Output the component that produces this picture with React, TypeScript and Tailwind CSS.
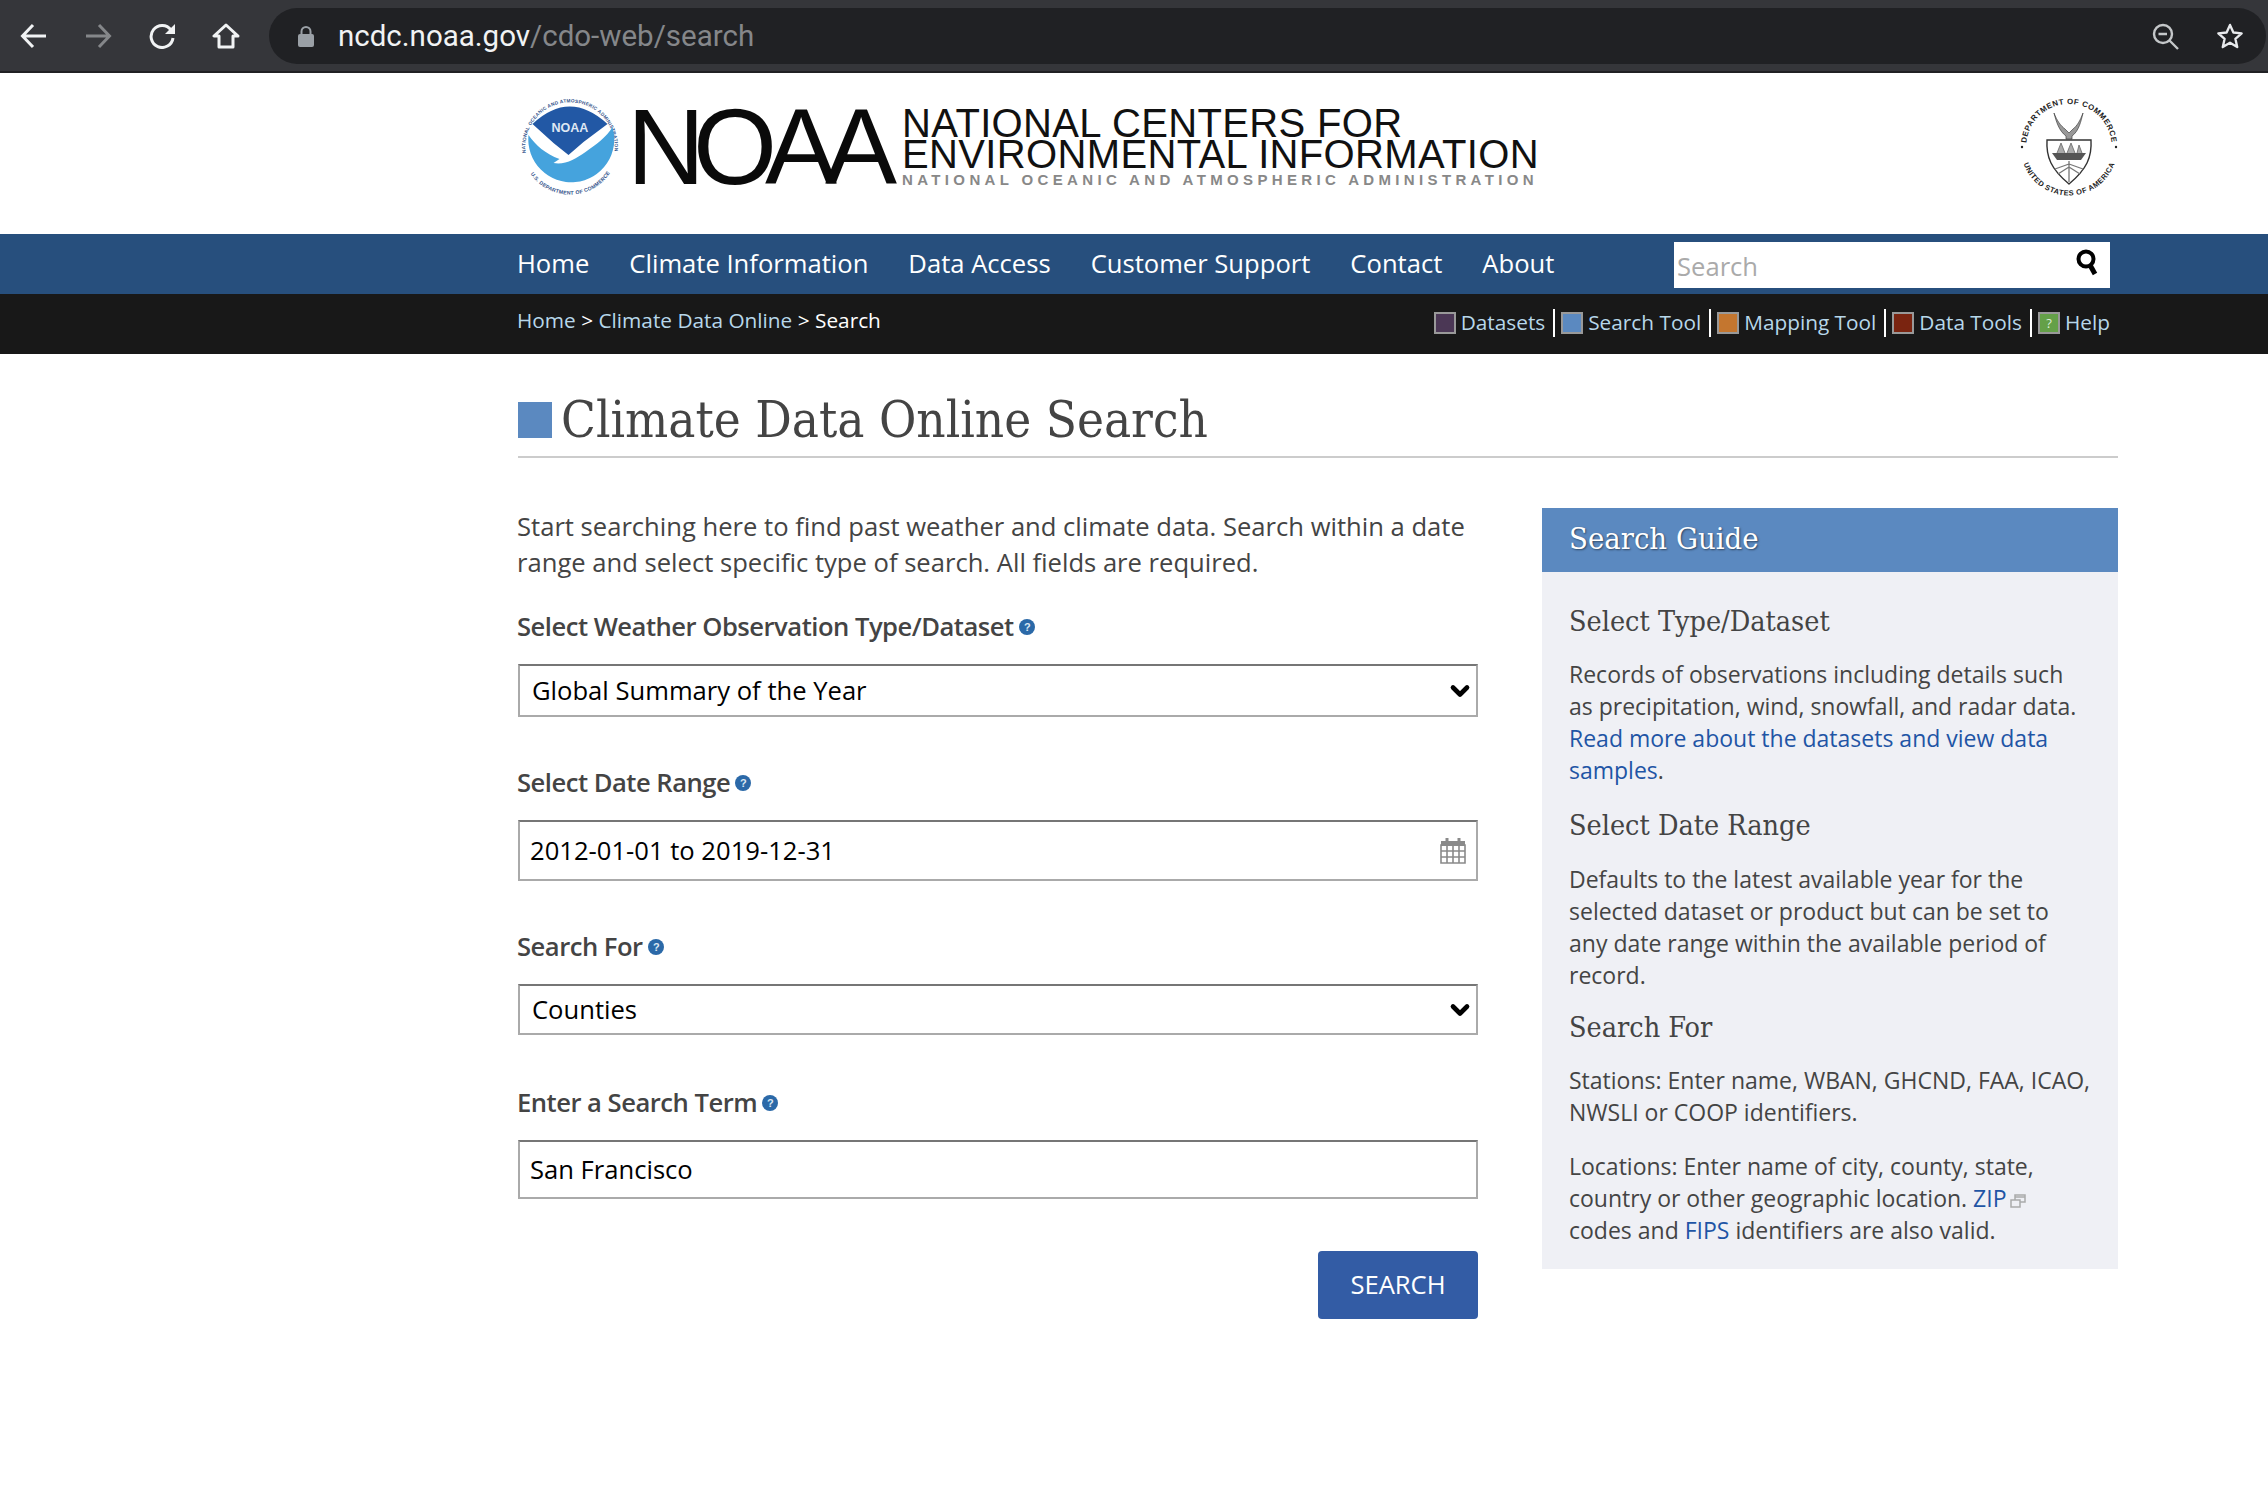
import { ChevronDown } from "lucide-react";
import type { ReactNode } from "react";

function NoaaSeal() {
  return (
    <svg width="98" height="100" viewBox="0 0 98 100" className="shrink-0">
      <defs>
        <path id="noaa-top" d="M5 58 A44.7 44.7 0 1 1 93 58" />
        <path id="noaa-bottom" d="M4 66 A47.8 47.8 0 0 0 94 66" />
      </defs>
      <text fontSize="4.8" fontWeight="700" fill="#35558c" fontFamily="Liberation Sans, sans-serif">
        <textPath href="#noaa-top" startOffset="2" textLength="150">NATIONAL OCEANIC AND ATMOSPHERIC ADMINISTRATION</textPath>
      </text>
      <text fontSize="5.2" fontWeight="700" fill="#35558c" fontFamily="Liberation Sans, sans-serif">
        <textPath href="#noaa-bottom" startOffset="12" textLength="94">U.S. DEPARTMENT OF COMMERCE</textPath>
      </text>
      <g transform="translate(2.5 0)">
        <path d="M5 38 C12 48 22 57 36 62 L30 66 C42 68 52 62 62 55 C72 48 83 40 89 30 A43 43 0 1 1 5 38 Z" fill="#45a3dd" />
        <path d="M9 27 Q46 -8 84 27 L60 45 L45 58 L30 46 Z" fill="#2258a5" />
        <text x="46.5" y="35" textAnchor="middle" fontSize="12.5" fontWeight="700" fill="#dfe8f3" fontFamily="Liberation Sans, sans-serif">NOAA</text>
      </g>
    </svg>
  );
}

function CommerceSeal() {
  return (
    <svg width="100" height="100" viewBox="0 0 100 100" className="shrink-0">
      <defs>
        <path id="doc-top" d="M8 58 A42.8 42.8 0 1 1 92 58" />
        <path id="doc-bottom" d="M3 62 A48.5 48.5 0 0 0 97 62" />
      </defs>
      <text fontSize="7.8" fontWeight="700" fill="#222" fontFamily="Liberation Sans, sans-serif">
        <textPath href="#doc-top" startOffset="12" textLength="126">DEPARTMENT OF COMMERCE</textPath>
      </text>
      <text fontSize="7.4" fontWeight="700" fill="#222" fontFamily="Liberation Sans, sans-serif">
        <textPath href="#doc-bottom" startOffset="5" textLength="118">UNITED STATES OF AMERICA</textPath>
      </text>
      <circle cx="3" cy="50" r="1.2" fill="#222" />
      <circle cx="97" cy="50" r="1.2" fill="#222" />
      <path d="M35 16 C38 24 42 29 46 32 L50 36 L54 32 C58 29 61 24 64 16 C62 24 60 34 53 39 L53 42 L47 42 L47 39 C40 34 37 24 35 16 Z" fill="#999" stroke="#444" strokeWidth="0.7" />
      <path d="M28 43 L72 43 C73 60 68 72 50 87 C32 72 27 60 28 43 Z" fill="#fff" stroke="#333" strokeWidth="1.4" />
      <path d="M33 56 L67 56 L62 63 L38 63 Z" fill="#555" />
      <path d="M38 56 L42 46 L46 56 M48 56 L52 46 L56 56 M58 56 L60 48 L63 56" fill="#aaa" stroke="#666" strokeWidth="0.8" />
      <path d="M50 64 L50 85 M50 67 L36 72 M50 67 L64 72 M50 70 L39 77 M50 70 L61 77" stroke="#777" strokeWidth="1.3" fill="none" />
    </svg>
  );
}

function HelpDot() {
  return (
    <svg width="16" height="16" viewBox="0 0 16 16" className="ml-[5px] inline-block shrink-0">
      <circle cx="8" cy="8" r="8" fill="#2b69a8" />
      <text x="8" y="12" textAnchor="middle" fontSize="11" fontWeight="700" fill="#dbe7f3" fontFamily="Liberation Sans, sans-serif">?</text>
    </svg>
  );
}

function FieldLabel({ children, className }: { children: ReactNode; className: string }) {
  return (
    <div className={`flex h-9 items-center text-[25.6px] font-semibold tracking-[-0.5px] text-[#444] ${className}`}>
      {children}
      <HelpDot />
    </div>
  );
}

function SelectBox({ value, className }: { value: string; className: string }) {
  return (
    <div className={`relative mt-[19px] ${className}`}>
      <select
        defaultValue={value}
        className="h-full w-full appearance-none border-2 border-[#aaa] border-t-[#767676] bg-white pl-3 pt-[2px] text-[25.6px] text-black outline-none"
      >
        <option>{value}</option>
      </select>
      <ChevronDown className="absolute right-[4px] top-1/2 -translate-y-1/2 text-black" size={28} strokeWidth={4} />
    </div>
  );
}

function TextBox({ value, className, children }: { value: string; className: string; children?: ReactNode }) {
  return (
    <div className={`relative mt-[19px] ${className}`}>
      <input
        readOnly
        value={value}
        className="h-full w-full border-2 border-[#aaa] border-t-[#767676] bg-white pl-[10px] text-[25.6px] text-black outline-none"
      />
      {children}
    </div>
  );
}

function ToolLink({ color, label, last, help }: { color: string; label: string; last?: boolean; help?: boolean }) {
  return (
    <div className="flex items-center">
      <span
        className={`flex h-[22px] w-[22px] items-center justify-center border-2 border-[#999] text-[13px] leading-none text-[#dfeeda] ${color}`}
      >
        {help ? "?" : ""}
      </span>
      <span className="ml-[5px] text-[20.8px] text-[#b7d7ea]">{label}</span>
      {!last && <span className="ml-[8px] mr-[6px] h-[28px] w-[2px] bg-white" />}
    </div>
  );
}

function GuideHeading({ children, className }: { children: ReactNode; className: string }) {
  return (
    <h3 className={`h-10 text-[28.5px] leading-10 text-[#444] [font-family:'DejaVu_Serif_Condensed','DejaVu_Serif',serif] ${className}`}>
      {children}
    </h3>
  );
}

export default function App() {
  return (
    <div className="min-h-[1512px] w-[2268px] overflow-hidden bg-white [font-family:'Open_Sans',sans-serif]">
      {/* browser toolbar */}
      <div className="flex h-[73px] items-center border-b-2 border-[#202124] bg-[#35363a] pl-[20px] pr-[2px] pt-[1px]">
        <svg width="27" height="26" viewBox="0 0 27 26" fill="none" stroke="#f1f3f4" strokeWidth="3">
          <path d="M26 13 H3 M13 2 L2.5 13 L13 24" />
        </svg>
        <svg width="27" height="26" viewBox="0 0 27 26" fill="none" stroke="#85878a" strokeWidth="3" className="ml-[38px]">
          <path d="M1 13 H24 M14 2 L24.5 13 L14 24" />
        </svg>
        <svg width="28" height="26" viewBox="0 0 28 26" fill="none" className="ml-[36px]">
          <path d="M23 7 A11 11 0 1 0 25 15" stroke="#f1f3f4" strokeWidth="3" />
          <path d="M27 1 V11 H17 Z" fill="#f1f3f4" />
        </svg>
        <svg width="28" height="26" viewBox="0 0 28 26" fill="none" stroke="#f1f3f4" strokeWidth="3" className="ml-[36px]">
          <path d="M14 2 L2 13 H7 V24 H21 V13 H26 Z" strokeLinejoin="round" />
        </svg>
        <div className="ml-[29px] flex h-[56px] flex-1 items-center rounded-[28px] bg-[#202124] pl-[29px] pr-[22px]">
          <svg width="16" height="21" viewBox="0 0 16 21">
            <path d="M3.5 9 V5.5 A4.5 4.5 0 0 1 12.5 5.5 V9" fill="none" stroke="#9aa0a6" strokeWidth="2" />
            <rect x="0" y="8" width="16" height="13" rx="2" fill="#9aa0a6" />
          </svg>
          <div className="ml-[24px] pt-[1px] text-[29.5px] leading-none [font-family:Roboto,sans-serif]">
            <span className="text-[#f1f3f4]">ncdc.noaa.gov</span>
            <span className="text-[#85878a]">/cdo-web/search</span>
          </div>
          <svg width="28" height="27" viewBox="0 0 28 27" fill="none" stroke="#c4c7c9" strokeWidth="2.4" className="ml-auto">
            <circle cx="11" cy="11" r="9" />
            <path d="M6.5 11 H15 M17.5 17.5 L26 26" />
          </svg>
          <svg width="28" height="28" viewBox="0 0 24 24" fill="none" stroke="#e8eaed" strokeWidth="2" className="ml-[36px]">
            <path d="M12 2.5 L14.9 9 L22 9.7 L16.6 14.4 L18.2 21.5 L12 17.8 L5.8 21.5 L7.4 14.4 L2 9.7 L9.1 9 Z" strokeLinejoin="round" />
          </svg>
        </div>
      </div>

      {/* logo header */}
      <div className="h-[161px]">
        <div className="ml-[517px] flex w-[1602px] items-start justify-between pt-[24px]">
          <div className="flex items-start pl-[4px]">
            <NoaaSeal />
            <div className="ml-[8px] mt-[-5px] text-[108px] leading-[110px] tracking-[-12px] text-[#0a0a0a] [font-family:'Liberation_Sans',sans-serif]">
              NOAA
            </div>
            <div className="ml-[17px] mt-[11px] flex flex-col [font-family:'Liberation_Sans',sans-serif]">
              <div className="h-[31px] text-[40px] leading-[31px] tracking-[0.35px] text-[#111]">NATIONAL CENTERS FOR</div>
              <div className="h-[31px] text-[40px] leading-[31px] tracking-[0.35px] text-[#111]">ENVIRONMENTAL INFORMATION</div>
              <div className="mt-[2px] text-[15px] font-bold leading-[15px] tracking-[4.35px] text-[#888]">
                NATIONAL OCEANIC AND ATMOSPHERIC ADMINISTRATION
              </div>
            </div>
          </div>
          <CommerceSeal />
        </div>
      </div>

      {/* main nav */}
      <div className="h-[60px] bg-[#274f7d]">
        <div className="ml-[517px] flex h-full w-[1593px] items-center justify-between">
          <div className="flex gap-[40px] text-[25.6px] text-white">
            <span>Home</span>
            <span>Climate Information</span>
            <span>Data Access</span>
            <span>Customer Support</span>
            <span>Contact</span>
            <span>About</span>
          </div>
          <div className="relative mt-[2px] h-[46px] w-[436px] bg-white">
            <input
              readOnly
              placeholder="Search"
              className="h-full w-full pl-[3px] pt-[3px] text-[25.6px] outline-none placeholder:text-[#aaa]"
            />
            <svg width="24" height="28" viewBox="0 0 24 28" fill="none" className="absolute right-[11px] top-[7px]" stroke="#000">
              <circle cx="11" cy="10" r="7.5" strokeWidth="4" />
              <path d="M15 16 L20 25" strokeWidth="5" />
            </svg>
          </div>
        </div>
      </div>

      {/* breadcrumb and tools */}
      <div className="h-[60px] bg-[#181818]">
        <div className="ml-[517px] flex h-full w-[1593px] justify-between">
          <div className="pt-[11px] text-[20.8px] leading-[30px] text-white">
            <span className="text-[#b7d7ea]">Home</span> {">"} <span className="text-[#b7d7ea]">Climate Data Online</span> {">"} Search
          </div>
          <div className="flex items-center pb-[2px]">
            <ToolLink color="bg-[#4b3755]" label="Datasets" />
            <ToolLink color="bg-[#5b89c0]" label="Search Tool" />
            <ToolLink color="bg-[#c4762f]" label="Mapping Tool" />
            <ToolLink color="bg-[#7a2410]" label="Data Tools" />
            <ToolLink color="bg-[#64a048]" label="Help" help last />
          </div>
        </div>
      </div>

      {/* page body */}
      <div className="ml-[518px] w-[1600px]">
        <div className="flex h-[104px] items-end border-b-2 border-[#ccc] pb-[6px]">
          <span className="mb-[12px] h-[36px] w-[34px] bg-[#5b89c0]" />
          <h1 className="ml-[9px] text-[50.7px] leading-[60px] text-[#444] [font-family:'DejaVu_Serif_Condensed','DejaVu_Serif',serif]">
            Climate Data Online Search
          </h1>
        </div>

        <div className="mt-[50px] flex items-start justify-between">
          <div className="w-[960px]">
            <p className="ml-[-1px] mt-[1px] w-[970px] text-[25.6px] leading-9 text-[#444]">
              Start searching here to find past weather and climate data. Search within a date range and select specific type of search. All fields are required.
            </p>

            <FieldLabel className="ml-[-1px] mt-[28px]">Select Weather Observation Type/Dataset</FieldLabel>
            <SelectBox value="Global Summary of the Year" className="h-[53px]" />

            <FieldLabel className="ml-[-1px] mt-[48px]">Select Date Range</FieldLabel>
            <TextBox value="2012-01-01 to 2019-12-31" className="h-[61px]">
              <svg width="26" height="26" viewBox="0 0 26 26" className="absolute right-[12px] top-[18px]" fill="none" stroke="#8a8a8a" strokeWidth="1.6">
                <path d="M1 7 H25 V25 H1 Z M1 13 H25 M1 19 H25 M7 7 V25 M13 7 V25 M19 7 V25" />
                <path d="M1 8 V3 H25 V8 Z" fill="#8a8a8a" stroke="none" />
                <path d="M7 0 V5 M19 0 V5" stroke="#8a8a8a" strokeWidth="3" />
              </svg>
            </TextBox>

            <FieldLabel className="ml-[-1px] mt-[48px]">Search For</FieldLabel>
            <SelectBox value="Counties" className="h-[51px]" />

            <FieldLabel className="ml-[-1px] mt-[50px]">Enter a Search Term</FieldLabel>
            <TextBox value="San Francisco" className="h-[59px]" />

            <div className="mt-[52px] flex justify-end">
              <button className="h-[68px] w-[160px] rounded-[4px] bg-[#335ca5] text-[25.6px] text-white">SEARCH</button>
            </div>
          </div>

          <aside className="w-[576px] bg-[#eff0f5]">
            <h2 className="h-16 bg-[#5b89c0] pl-[27px] text-[30.7px] leading-[62px] text-white [font-family:'DejaVu_Serif_Condensed','DejaVu_Serif',serif] [text-shadow:1px_1px_2px_rgba(0,0,0,0.5)]">
              Search Guide
            </h2>
            <div className="px-[27px] pb-[23px] pt-[30px] text-[23px] leading-8 text-[#444]">
              <GuideHeading className="">Select Type/Dataset</GuideHeading>
              <p className="mt-[16px]">
                Records of observations including details such as precipitation, wind, snowfall, and radar data.{" "}
                <span className="text-[#1f55a5]">Read more about the datasets and view data samples</span>.
              </p>
              <GuideHeading className="mt-[20px]">Select Date Range</GuideHeading>
              <p className="mt-[17px]">
                Defaults to the latest available year for the selected dataset or product but can be set to any date range within the available period of record.
              </p>
              <GuideHeading className="mt-[17px]">Search For</GuideHeading>
              <p className="mt-[16px]">Stations: Enter name, WBAN, GHCND, FAA, ICAO, NWSLI or COOP identifiers.</p>
              <p className="mt-[22px]">
                Locations: Enter name of city, county, state, country or other geographic location.{" "}
                <span className="text-[#1f55a5]">ZIP</span>
                <svg width="16" height="14" viewBox="0 0 16 14" className="ml-[3px] inline-block" fill="none" stroke="#aaa" strokeWidth="1.5">
                  <path d="M5 1 H15 V8 H5 Z M5 3 H15" />
                  <path d="M1 6 H10 V13 H1 Z" fill="#eff0f5" />
                </svg>{" "}
                codes and <span className="text-[#1f55a5]">FIPS</span> identifiers are also valid.
              </p>
            </div>
          </aside>
        </div>
      </div>
    </div>
  );
}
